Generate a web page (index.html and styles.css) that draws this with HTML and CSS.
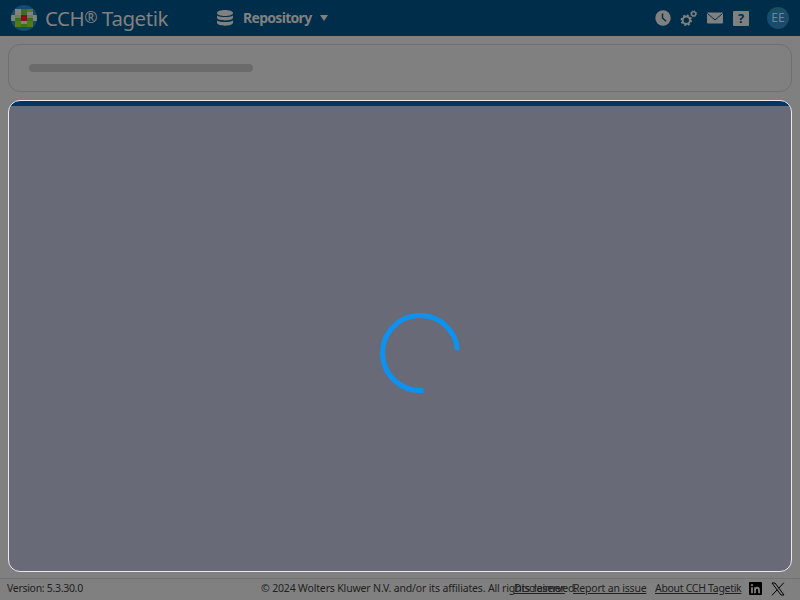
FILE: index.html
```html
<!DOCTYPE html>
<html lang="en">
<head>
<meta charset="utf-8">
<title>CCH Tagetik</title>
<link rel="stylesheet" href="styles.css">
</head>
<body>
<header class="topbar">
  <svg class="logo" viewBox="0 0 26 26">
    <defs><clipPath id="disc"><circle cx="13" cy="13" r="13"/></clipPath></defs>
    <g clip-path="url(#disc)">
      <path fill="#154b70" d="M0 0h26v26H0z"/>
      <path fill="#426d1c" d="M10 4h6v6h-6zM4 10h6v6H4zM16 10h6v6h-6zM10 16h6v6h-6z"/>
      <path fill="#567916" d="M4 16h6v6H4zM16 16h6v6h-6zM16 4h6v6h-6z"/>
      <path fill="#7d8580" d="M4 4h6v6H4zM0 10h4v6H0zM22 10h4v6h-4zM16 7h6v3h-6zM10 16h6v3h-6z"/>
      <path fill="#697f55" d="M4 10h6v3H4zM16 10h6v3h-6z"/>
      <path fill="#86101b" d="M10 10h6v6h-6z"/>
    </g>
  </svg>
  <span class="brand">CCH<span class="registered">®</span> Tagetik</span>
  <button class="repository">
    <svg class="database" viewBox="0 0 16 16"><path d="M0 3C0-1 16-1 16 3S0 7 0 3zM0 5.500c3 2 13 2 16 0V8c-1 3.200-15 3.200-16 0zM0 10.500c3 2 13 2 16 0V13c-1 3.500-15 3.500-16 0z"/></svg>
    <span class="repository-label">Repository</span>
    <svg class="caret" viewBox="0 0 8 6"><path d="M0 0h8L4 6z"/></svg>
  </button>
  <nav class="tools">
    <svg class="tool" viewBox="0 0 16 16"><circle cx="8" cy="8" r="7.700"/><path class="cut" d="M7.500 3.500V8l3.500 3.300"/></svg>
    <svg class="tool gears" viewBox="0 0 16 16"><g class="gear"><circle cx="5.300" cy="10.300" r="3.700"/><circle class="teeth" cx="5.300" cy="10.300" r="4.900"/><circle class="small" cx="12.600" cy="3.800" r="2.100"/><circle class="small-teeth" cx="12.600" cy="3.800" r="3"/></g></svg>
    <svg class="tool" viewBox="0 0 16 16"><rect y="2.500" width="16" height="11" rx="1"/><path class="cut thin" d="M.5 3.500 8 10l7.500-6.500"/></svg>
    <span class="help">?</span>
  </nav>
  <span class="avatar">EE</span>
</header>
<main class="content">
  <section class="toolbar"><div class="placeholder"></div></section>
  <section class="panel">
    <svg class="spinner" viewBox="0 0 80 80"><path d="M77.400 37A37.500 37.500 0 1 0 43.500 77.300"/></svg>
  </section>
</main>
<footer class="footer">
  <span class="version">Version: 5.3.30.0</span>
  <span class="copyright">© 2024 Wolters Kluwer N.V. and/or its affiliates. All rights reserved.</span>
  <nav class="links">
    <a class="disclaimer" href="#">Disclaimer</a>
    <a class="report" href="#">Report an issue</a>
    <a class="about" href="#">About CCH Tagetik</a>
    <svg class="social" viewBox="0 0 14 14"><rect width="13" height="13" rx="1"/><path class="linked" d="M3 5.200v6M6 5.200v6M6 8c0-3 4-3 4 0v3.200"/><circle class="dot" cx="3" cy="3.100" r="1.100"/></svg>
    <svg class="social x" viewBox="0 0 14 14"><path d="M1 1h3l9 12h-3zM12.800.7 7.700 6.300M6.300 7.700 1 13.300"/></svg>
  </nav>
</footer>
</body>
</html>
```
FILE: styles.css
```css
* { box-sizing: border-box; }
body {
  margin: 0;
  width: 800px;
  height: 600px;
  display: flex;
  flex-direction: column;
  overflow: hidden;
  background: #808080;
  font-family: "Noto Sans", sans-serif;
}
svg { display: block; flex: none; }
.topbar {
  height: 36px;
  flex: none;
  display: flex;
  align-items: center;
  padding: 0 11px;
  background: #002e4a;
  color: #808080;
}
.logo { width: 26px; height: 26px; }
.brand {
  width: 125px;
  margin-left: 8px;
  padding-bottom: 1px;
  font-size: 20.5px;
  line-height: 34px;
  letter-spacing: -0.45px;
  white-space: nowrap;
}
.registered { font-size: 16px; line-height: 1; vertical-align: 3px; }
.repository {
  display: flex;
  align-items: center;
  margin-left: 47px;
  padding: 0;
  border: 0;
  background: none;
  color: inherit;
  font: bold 14px/36px "Noto Sans", sans-serif;
}
.database { width: 16px; height: 16px; fill: #808080; }
.repository-label { width: 69px; margin-left: 10px; text-align: left; letter-spacing: -0.7px; }
.caret { width: 8px; height: 6px; margin-left: 8px; fill: #808080; }
.tools { display: flex; align-items: center; gap: 10px; margin-left: auto; margin-right: 18px; }
.tool { width: 16px; height: 16px; fill: #808080; }
.gears { overflow: visible; }
.cut { fill: none; stroke: #002e4a; stroke-width: 1.5; }
.thin { stroke-width: 1; }
.gear { fill: none; stroke: #808080; stroke-width: 2; }
.teeth { stroke-dasharray: 1.92 1.92; stroke-width: 1.7; }
.small { stroke-width: 1.4; }
.small-teeth { stroke-width: 1; stroke-dasharray: 1.18 1.18; }
.help {
  width: 16px;
  height: 15px;
  border-radius: 1px;
  background: #808080;
  color: #002e4a;
  font-size: 13px;
  font-weight: bold;
  line-height: 15px;
  text-align: center;
}
.avatar {
  width: 22px;
  height: 22px;
  border-radius: 50%;
  background: #1b4b69;
  color: #808080;
  font-size: 12px;
  line-height: 22px;
  text-align: center;
}
.content { flex: 1; padding: 8px 8px 6px; display: flex; flex-direction: column; gap: 8px; }
.toolbar {
  height: 48px;
  display: flex;
  align-items: center;
  padding-left: 20px;
  border: 1px solid #6f6f6f;
  border-radius: 12px;
}
.placeholder { width: 224px; height: 8px; border-radius: 4px; background: #6b6b6b; }
.panel {
  height: 472px;
  border: 1px solid #e8e8ee;
  border-radius: 12px;
  background: linear-gradient(#003660 5px, #686a77 5px);
  overflow: hidden;
}
.spinner { width: 80px; height: 80px; margin: 212px 0 0 371px; fill: none; stroke: #0c93f2; stroke-width: 5; }
.footer {
  height: 22px;
  flex: none;
  display: flex;
  align-items: center;
  padding: 0 15px 2px 7px;
  border-top: 1px solid #727272;
  color: #202020;
  font-size: 10.5px;
  line-height: 19px;
  white-space: nowrap;
}
.version { width: 254px; letter-spacing: -0.3px; }
.copyright { width: 253px; letter-spacing: -0.16px; }
.links { display: flex; align-items: center; }
.links a { color: inherit; }
.disclaimer { width: 59px; letter-spacing: -0.1px; }
.report { width: 82px; letter-spacing: -0.2px; }
.about { width: 94px; letter-spacing: -0.3px; }
.social { width: 14px; height: 14px; fill: #000; }
.linked { fill: none; stroke: #808080; stroke-width: 1.8; }
.dot { fill: #808080; }
.x { margin-left: 8px; fill: none; stroke: #000; stroke-width: 1; }
```
